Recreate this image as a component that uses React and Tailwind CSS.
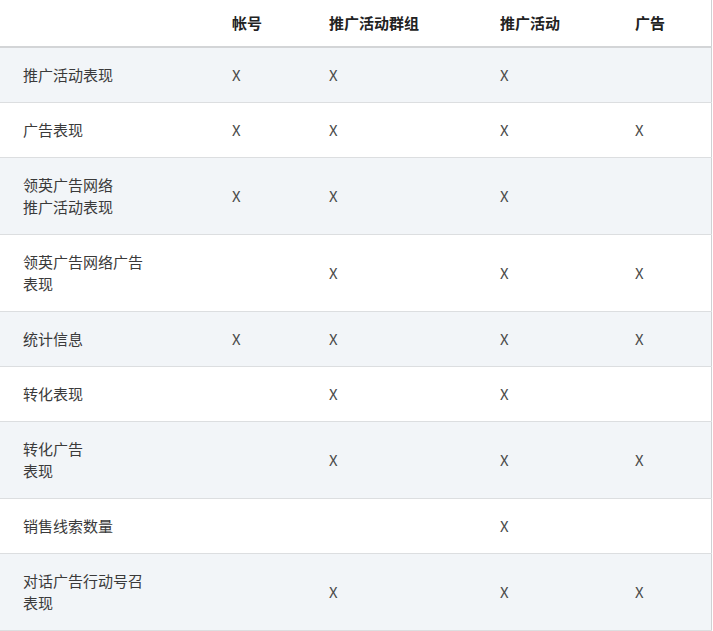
const rows = [
  { name: ["推广活动表现"], cols: [true, true, true, false] },
  { name: ["广告表现"], cols: [true, true, true, true] },
  { name: ["领英广告网络", "推广活动表现"], cols: [true, true, true, false] },
  { name: ["领英广告网络广告", "表现"], cols: [false, true, true, true] },
  { name: ["统计信息"], cols: [true, true, true, true] },
  { name: ["转化表现"], cols: [false, true, true, false] },
  { name: ["转化广告", "表现"], cols: [false, true, true, true] },
  { name: ["销售线索数量"], cols: [false, false, true, false] },
  { name: ["对话广告行动号召", "表现"], cols: [false, true, true, true] },
];

const headers = ["帐号", "推广活动群组", "推广活动", "广告"];

export default function App() {
  return (
    <div className="w-[713px] bg-white font-['Noto_Sans_CJK_SC','Noto_Sans',sans-serif]">
      <table className="w-[712px] table-fixed border-collapse border-r border-[#cfd1d3] text-[15px] leading-[22px]">
        <colgroup>
          <col className="w-[209px]" />
          <col className="w-[97px]" />
          <col className="w-[171px]" />
          <col className="w-[135px]" />
          <col />
        </colgroup>
        <thead>
          <tr className="h-[47px] border-b-2 border-[#d3d5d7]">
            <th className="pl-[23px]" />
            {headers.map((h) => (
              <th key={h} className="pl-[23px] text-left align-middle font-semibold text-[#222]">
                {h}
              </th>
            ))}
          </tr>
        </thead>
        <tbody>
          {rows.map((r, i) => (
            <tr
              key={i}
              className={`border-b border-[#dcdee0] ${i % 2 === 0 ? "bg-[#f2f5f8]" : "bg-white"}`}
            >
              <td className="pl-[23px] py-4 align-middle text-[#3a3a3a]">
                {r.name.map((line) => (
                  <div key={line}>{line}</div>
                ))}
              </td>
              {r.cols.map((c, j) => (
                <td key={j} className="pl-[23px] py-4 align-middle text-[#4a4a4a]">
                  {c ? "X" : ""}
                </td>
              ))}
            </tr>
          ))}
        </tbody>
      </table>
    </div>
  );
}
